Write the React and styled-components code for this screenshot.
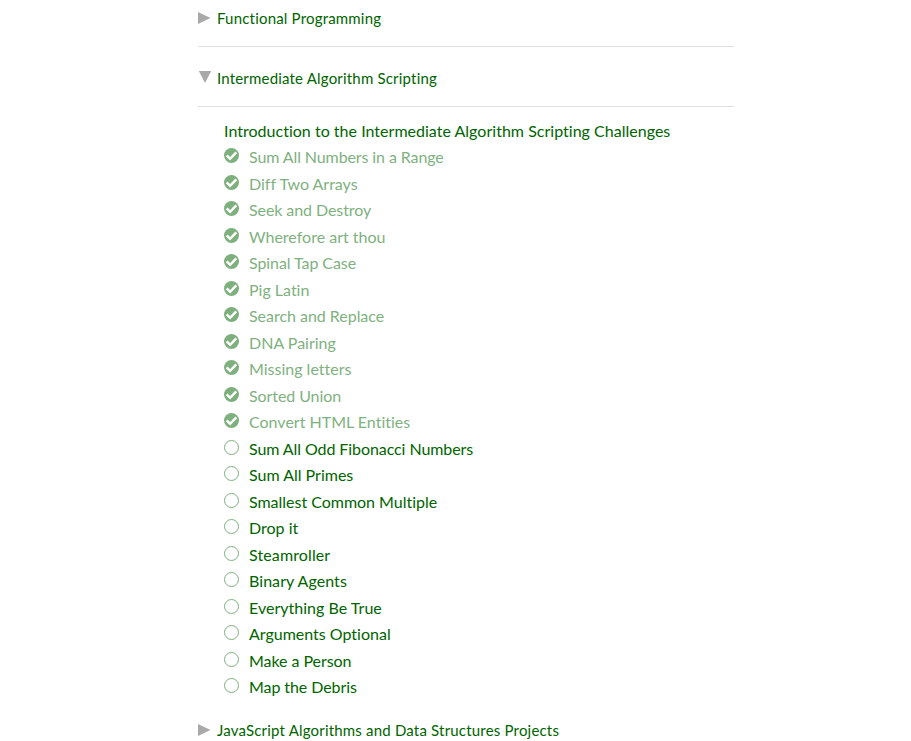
import React from 'react';
import styled, { createGlobalStyle } from 'styled-components';

const GlobalStyle = createGlobalStyle`
  body { margin: 0; background: #fff; overflow: hidden; }
  * { box-sizing: border-box; }
`;

const Page = styled.main`
  width: 536px;
  height: 741px;
  margin-left: 198px;
  overflow: hidden;
  font: 16px/26.5px Lato, sans-serif;
  font-variant-ligatures: none;
  color: #006400;
`;

const BlockHeader = styled.div`
  display: flex;
  align-items: flex-start;
  height: ${p => p.$height}px;
  padding-top: ${p => p.$top}px;
  border-bottom: ${p => (p.$last ? '0' : '1px solid #e0e0e0')};
`;

const Arrow = styled.svg`
  flex: none;
  width: 14px;
  height: 14px;
  margin: 6px 5px 0 0;
  fill: #a9a9a9;
`;

const BlockTitle = styled.h5`
  margin: 0;
  font-size: 15px;
  font-weight: 400;
  letter-spacing: 0.19px;
  white-space: nowrap;
`;

const List = styled.ul`
  list-style: none;
  margin: 0;
  padding: 10.9px 0 0 26px;
  height: 597px;
`;

const Item = styled.li`
  display: flex;
  height: 26.5px;
  white-space: nowrap;
  letter-spacing: ${p => p.$tracking || 0}px;
`;

const Label = styled.span`
  color: ${p => (p.$done ? '#80b180' : '#006400')};
`;

const Status = styled.svg`
  flex: none;
  width: 15px;
  height: 15px;
  margin: 4px 10px 0 0;
  opacity: 0.5;
`;

const Block = ({ title, open, ...rest }) => (
  <BlockHeader {...rest}>
    <Arrow viewBox="0 0 14 14">
      <path d={open ? 'M0.8 0h12.4L7 12z' : 'M0 1v12L12.5 7z'} />
    </Arrow>
    <BlockTitle>{title}</BlockTitle>
  </BlockHeader>
);

const challenges = [
  { name: 'Sum All Numbers in a Range', done: true, tracking: -0.1 },
  { name: 'Diff Two Arrays', done: true },
  { name: 'Seek and Destroy', done: true, tracking: -0.08 },
  { name: 'Wherefore art thou', done: true },
  { name: 'Spinal Tap Case', done: true, tracking: -0.08 },
  { name: 'Pig Latin', done: true },
  { name: 'Search and Replace', done: true, tracking: -0.03 },
  { name: 'DNA Pairing', done: true },
  { name: 'Missing letters', done: true },
  { name: 'Sorted Union', done: true, tracking: -0.08 },
  { name: 'Convert HTML Entities', done: true },
  { name: 'Sum All Odd Fibonacci Numbers', tracking: -0.08 },
  { name: 'Sum All Primes' },
  { name: 'Smallest Common Multiple', tracking: -0.02 },
  { name: 'Drop it' },
  { name: 'Steamroller', tracking: 0.12 },
  { name: 'Binary Agents', tracking: 0.06 },
  { name: 'Everything Be True', tracking: 0.02 },
  { name: 'Arguments Optional' },
  { name: 'Make a Person', tracking: -0.06 },
  { name: 'Map the Debris', tracking: -0.08 },
];

export default function App() {
  return (
    <>
      <GlobalStyle />
      <Page>
        <Block title="Functional Programming" $height={47} $top={5} />
        <Block title="Intermediate Algorithm Scripting" open $height={60} $top={18} />
        <List>
          <Item $tracking={0.02}>Introduction to the Intermediate Algorithm Scripting Challenges</Item>
          {challenges.map(({ name, done, tracking }) => (
            <Item key={name} $tracking={tracking}>
              <Status viewBox="0 0 15 15">
                <circle
                  cx="7.5"
                  cy="7.5"
                  r={done ? 7.5 : 7}
                  fill={done ? '#006400' : 'none'}
                  stroke={done ? 'none' : '#006400'}
                />
                {done && <path d="M2.7 7.3l3.4 3.5 6.2-6.5" fill="none" stroke="#fff" strokeWidth="2.5" />}
              </Status>
              <Label $done={done}>{name}</Label>
            </Item>
          ))}
        </List>
        <Block title="JavaScript Algorithms and Data Structures Projects" $last $height={37} $top={13} />
      </Page>
    </>
  );
}
